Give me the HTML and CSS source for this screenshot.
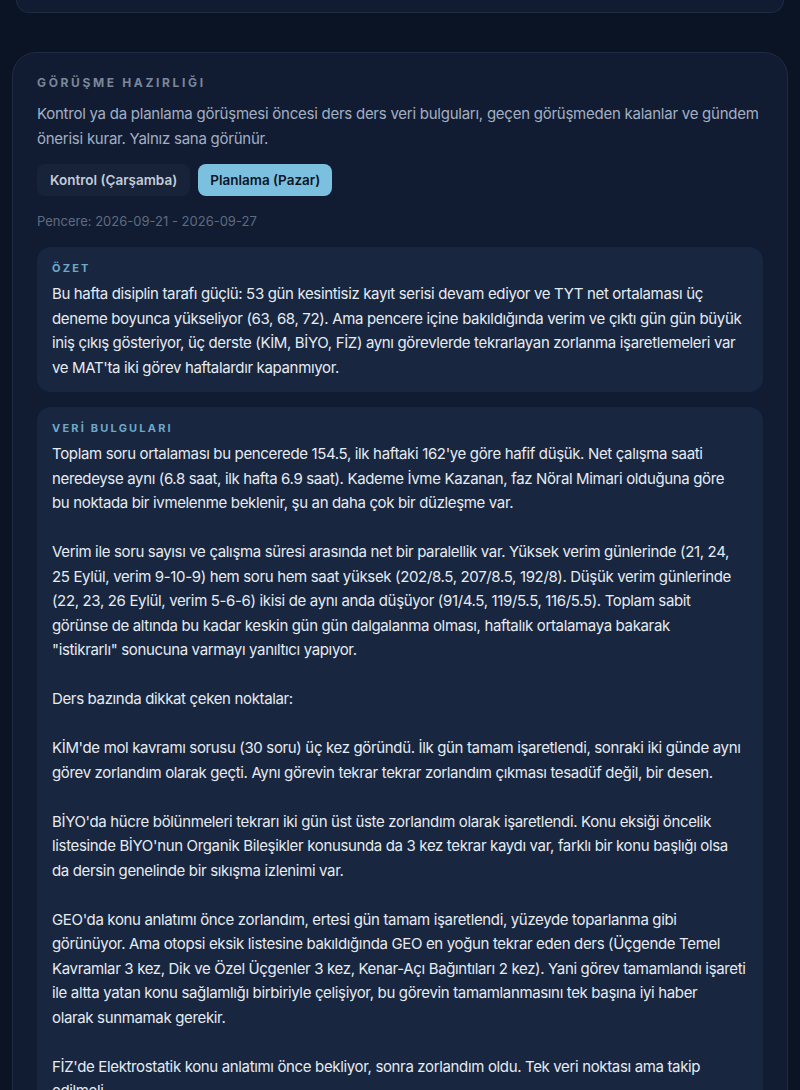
FILE: index.html
```html
<!DOCTYPE html>
<html lang="tr">
<head>
<meta charset="utf-8">
<title>Görüşme Hazırlığı</title>
<link rel="stylesheet" href="styles.css">
</head>
<body>
<div class="prev-card"></div>
<section class="card">
  <h2 class="eyebrow">Görüşme Hazırlığı</h2>
  <p class="desc">Kontrol ya da planlama görüşmesi öncesi ders ders veri bulguları, geçen görüşmeden kalanlar ve gündem önerisi kurar. Yalnız sana görünür.</p>
  <div class="tabs">
    <button class="tab">Kontrol (Çarşamba)</button>
    <button class="tab tab-active">Planlama (Pazar)</button>
  </div>
  <p class="window">Pencere: 2026-09-21 - 2026-09-27</p>

  <div class="box">
    <h3 class="box-label">Özet</h3>
    <div class="box-body">
      <p>Bu hafta disiplin tarafı güçlü: 53 gün kesintisiz kayıt serisi devam ediyor ve TYT net ortalaması üç<br>
      deneme boyunca yükseliyor (63, 68, 72). Ama pencere içine bakıldığında verim ve çıktı gün gün büyük<br>
      iniş çıkış gösteriyor, üç derste (KİM, BİYO, FİZ) aynı görevlerde tekrarlayan zorlanma işaretlemeleri var<br>
      ve MAT'ta iki görev haftalardır kapanmıyor.</p>
    </div>
  </div>

  <div class="box">
    <h3 class="box-label">Veri Bulguları</h3>
    <div class="box-body">
      <p>Toplam soru ortalaması bu pencerede 154.5, ilk haftaki 162'ye göre hafif düşük. Net çalışma saati<br>
      neredeyse aynı (6.8 saat, ilk hafta 6.9 saat). Kademe İvme Kazanan, faz Nöral Mimari olduğuna göre<br>
      bu noktada bir ivmelenme beklenir, şu an daha çok bir düzleşme var.</p>
      <p>Verim ile soru sayısı ve çalışma süresi arasında net bir paralellik var. Yüksek verim günlerinde (21, 24,<br>
      25 Eylül, verim 9-10-9) hem soru hem saat yüksek (202/8.5, 207/8.5, 192/8). Düşük verim günlerinde<br>
      (22, 23, 26 Eylül, verim 5-6-6) ikisi de aynı anda düşüyor (91/4.5, 119/5.5, 116/5.5). Toplam sabit<br>
      görünse de altında bu kadar keskin gün gün dalgalanma olması, haftalık ortalamaya bakarak<br>
      "istikrarlı" sonucuna varmayı yanıltıcı yapıyor.</p>
      <p>Ders bazında dikkat çeken noktalar:</p>
      <p>KİM'de mol kavramı sorusu (30 soru) üç kez göründü. İlk gün tamam işaretlendi, sonraki iki günde aynı<br>
      görev zorlandım olarak geçti. Aynı görevin tekrar tekrar zorlandım çıkması tesadüf değil, bir desen.</p>
      <p>BİYO'da hücre bölünmeleri tekrarı iki gün üst üste zorlandım olarak işaretlendi. Konu eksiği öncelik<br>
      listesinde BİYO'nun Organik Bileşikler konusunda da 3 kez tekrar kaydı var, farklı bir konu başlığı olsa<br>
      da dersin genelinde bir sıkışma izlenimi var.</p>
      <p>GEO'da konu anlatımı önce zorlandım, ertesi gün tamam işaretlendi, yüzeyde toparlanma gibi<br>
      görünüyor. Ama otopsi eksik listesine bakıldığında GEO en yoğun tekrar eden ders (Üçgende Temel<br>
      Kavramlar 3 kez, Dik ve Özel Üçgenler 3 kez, Kenar-Açı Bağıntıları 2 kez). Yani görev tamamlandı işareti<br>
      ile altta yatan konu sağlamlığı birbiriyle çelişiyor, bu görevin tamamlanmasını tek başına iyi haber<br>
      olarak sunmamak gerekir.</p>
      <p>FİZ'de Elektrostatik konu anlatımı önce bekliyor, sonra zorlandım oldu. Tek veri noktası ama takip<br>
      edilmeli.</p>
    </div>
  </div>
</section>
</body>
</html>
```
FILE: styles.css
```css
* { box-sizing: border-box; }
html, body { margin: 0; padding: 0; }
body {
  background: #0b1424;
  font-family: Inter, "Noto Sans", sans-serif;
  color: #e6ebf2;
  padding-bottom: 40px;
}
.prev-card {
  height: 13px;
  margin: 0 16px 0 16px;
  width: 768px;
  background: #111c33;
  border: 1px solid #1f2b43;
  border-top: none;
  border-radius: 0 0 24px 24px;
}
.card {
  margin: 39px 0 0 12px;
  width: 776px;
  background: #111c33;
  border: 1px solid #1f2b43;
  border-radius: 24px;
  padding: 22px 24px 24px;
}
.eyebrow {
  margin: 0;
  font-size: 12px;
  line-height: 16px;
  font-weight: 700;
  letter-spacing: 0.22em;
  text-transform: uppercase;
  color: #7b8698;
}
.desc {
  margin: 10px 0 0;
  font-size: 15px;
  line-height: 25px;
  letter-spacing: -0.25px;
  color: #a3afc2;
}
.tabs {
  display: flex;
  gap: 8px;
  margin-top: 13px;
}
.tab {
  font-family: inherit;
  font-size: 13.5px;
  font-weight: 600;
  height: 32px;
  padding: 0 13px;
  border: none;
  border-radius: 8px;
  background: #172339;
  color: #c2ccd9;
}
.tab-active {
  background: #7cc0e0;
  color: #0c1627;
  padding: 0 12px;
}
.window {
  margin: 15px 0 0;
  font-size: 13px;
  line-height: 20px;
  color: #5f6b7e;
}
.box {
  margin-top: 16px;
  background: #18263f;
  border-radius: 14px;
  padding: 13px 15px 12px;
}
.box + .box { margin-top: 15px; }
.box-label {
  margin: 0;
  font-size: 11px;
  line-height: 16px;
  font-weight: 700;
  letter-spacing: 0.2em;
  text-transform: uppercase;
  color: #6fa8c9;
}
.box-body {
  margin-top: 6px;
  font-size: 15px;
  line-height: 24.5px;
  letter-spacing: -0.35px;
}
.box-body p { margin: 0 0 24.5px; }
.box-body p:last-child { margin-bottom: 0; }
```
